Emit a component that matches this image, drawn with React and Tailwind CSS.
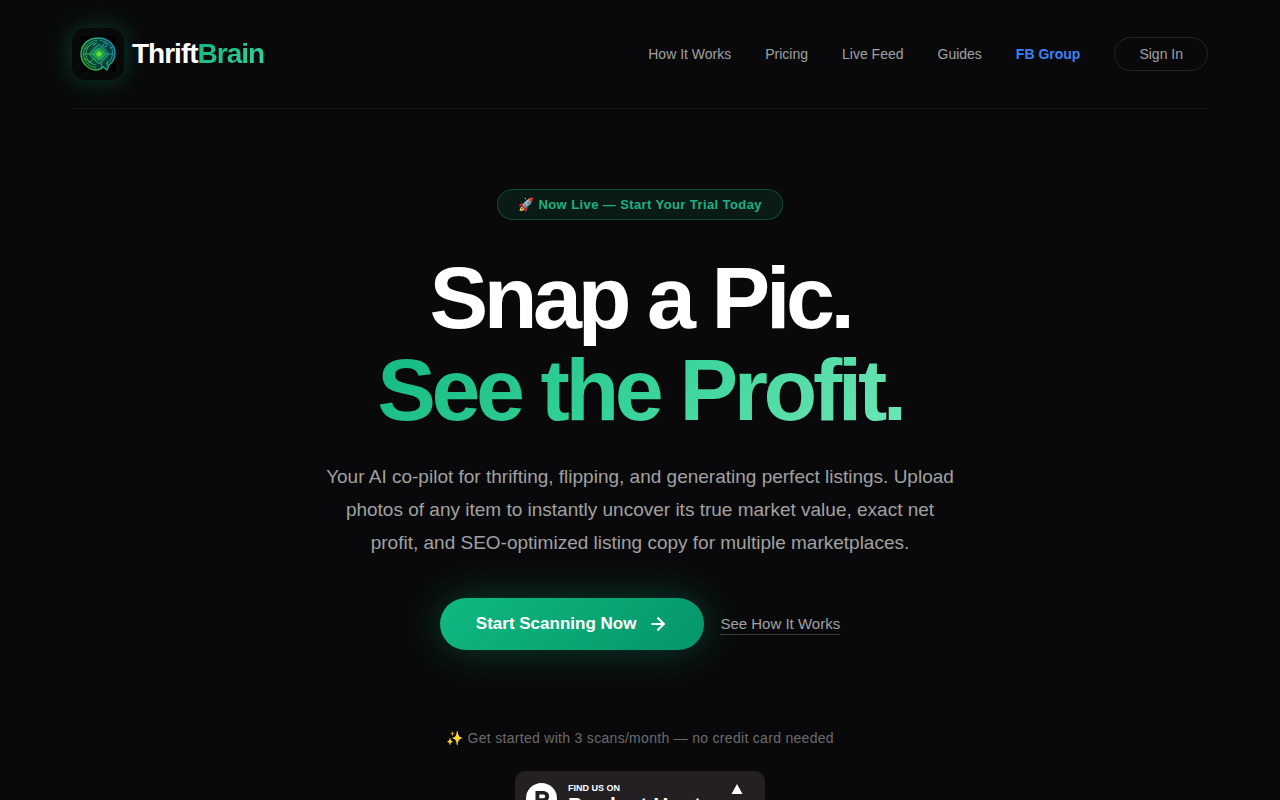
import { ArrowRight } from 'lucide-react';

const NAV_LINKS = [
  { label: 'How It Works', href: '#how-it-works' },
  { label: 'Pricing', href: '#pricing' },
  { label: 'Live Feed', href: '#live-feed' },
  { label: 'Guides', href: '#guides' }
];

function BrainMark() {
  return (
    <svg viewBox="0 0 36 36" className="size-9" fill="none" aria-hidden="true">
      <defs>
        <linearGradient id="mark-stroke" x1="4" y1="26" x2="33" y2="10" gradientUnits="userSpaceOnUse">
          <stop stopColor="#45b52e" />
          <stop offset="0.5" stopColor="#22b07a" />
          <stop offset="1" stopColor="#1f8fae" />
        </linearGradient>
        <radialGradient id="mark-core">
          <stop stopColor="#4fd42c" />
          <stop offset="0.45" stopColor="#1fa04c" stopOpacity="0.9" />
          <stop offset="1" stopColor="#0b5a5a" stopOpacity="0.4" />
        </radialGradient>
      </defs>
      <rect width="36" height="36" fill="#000" />
      <path
        d="M18 2C8 2 1 9 1 18c0 8 6 15 14 16 3 0 6-1 8-3l4 3 2-5c4-3 6-7 6-12C35 8 27 2 18 2Z"
        fill="#08403a"
      />
      <circle cx="19" cy="18" r="10" fill="url(#mark-core)" />
      <g stroke="url(#mark-stroke)" strokeWidth="0.9">
        <path
          d="M18 2C8 2 1 9 1 18c0 8 6 15 14 16 3 0 6-1 8-3l4 3 2-5c4-3 6-7 6-12C35 8 27 2 18 2Z"
          strokeWidth="1.4"
        />
        <path d="M17 4.500C9 5 3.500 11 3.500 18S9 31 16 31.500" />
        <path d="M15 7C9 8 6 13 6 18s4 10 10 11" />
        <path d="M20 4.500c8 1 12.500 6 12.500 12S29 26 26 28" />
        <path d="m19 8 10 10-10 10L9 18 19 8Z" />
        <path d="m19 12 7 6-7 6-7-6 7-6Z" />
        <path d="M3 18h12M23 18h11M5 13l8-6M4 22l8 5M8 27l6-4M22 31l-1-5M27 30l1-5M30 12l3-1M13 10l4-4" />
        <circle cx="25" cy="9" r="1.800" />
      </g>
      <path d="m19 15 3 3-3 3-3-3 3-3Z" fill="#6ae034" />
    </svg>
  );
}

function Header() {
  return (
    <header className="flex flex-wrap items-center justify-between gap-4 border-b border-white/5 py-7">
      <a href="#top" className="flex items-center gap-2">
        <span className="flex size-13 items-center justify-center rounded-[14px] bg-[#08090a] shadow-[0_0_24px_rgba(16,185,129,0.3)]">
          <BrainMark />
        </span>
        <span className="text-[28px] leading-8 font-bold tracking-[-1px] text-white">
          Thrift
          <span className="bg-linear-135 from-[#10b981] to-[#34d399] bg-clip-text text-transparent">Brain</span>
        </span>
      </a>

      <nav className="flex flex-wrap items-center gap-[34px] text-sm text-neutral-400">
        {NAV_LINKS.map((link) => (
          <a key={link.label} href={link.href} className="transition hover:text-white">
            {link.label}
          </a>
        ))}
        <a href="#fb-group" className="font-bold text-[#3b82f6]">
          FB Group
        </a>
        <button
          type="button"
          className="rounded-full border border-white/10 px-6 py-1.5 transition hover:border-white/30"
        >
          Sign In
        </button>
      </nav>
    </header>
  );
}

function ProductHuntBadge() {
  return (
    <a
      href="#product-hunt"
      className="flex h-[54px] w-[250px] items-start rounded-[10px] bg-[#231f23] pt-3 pr-[22px] pl-[11px] text-left text-white"
    >
      <svg viewBox="0 0 31 31" className="size-[31px] shrink-0" aria-hidden="true">
        <circle cx="15.5" cy="15.5" r="15.5" fill="#fff" />
        <path
          d="M9.5 8h8.2a5.4 5.4 0 0 1 0 10.8h-4.4V23H9.5V8Zm3.8 3.6v3.6h4.1a1.8 1.8 0 0 0 0-3.6h-4.1Z"
          fill="#231f23"
        />
      </svg>
      <span className="ml-[11px] flex flex-col">
        <span className="text-[9px] leading-[10px] font-bold">FIND US ON</span>
        <span className="text-[21px] leading-6 font-bold">Product Hunt</span>
      </span>
      <svg viewBox="0 0 12 11" className="ml-auto h-[11px] w-3" aria-hidden="true">
        <path d="M6 1l5.500 10H0.500L6 1Z" fill="#fff" />
      </svg>
    </a>
  );
}

function Hero() {
  return (
    <main className="flex flex-col items-center pt-20 text-center">
      <p className="rounded-full border border-[#10b981]/30 bg-[#10b981]/10 px-5 py-1 text-[13px] leading-[21px] font-bold tracking-[0.4px] text-[#1fb083]">
        🚀 Now Live — Start Your Trial Today
      </p>

      <h1 className="mt-8 text-[88px] leading-[92px] font-bold tracking-tighter text-white">
        Snap a Pic.
        <br />
        <span className="bg-linear-135 from-[#10b981] via-[#34d399] to-[#6ee7b7] bg-clip-text text-transparent">
          See the Profit.
        </span>
      </h1>

      <p className="mt-6 max-w-[640px] text-[19px] leading-[33px] text-neutral-400">
        Your AI co-pilot for thrifting, flipping, and generating perfect listings. Upload photos of any item to
        instantly uncover its true market value, exact net profit, and SEO-optimized listing copy for multiple
        marketplaces.
      </p>

      <div className="mt-[39px] flex flex-wrap items-center justify-center gap-4">
        <button
          type="button"
          className="flex h-13 items-center gap-3 rounded-full bg-linear-135 from-[#10b981] to-[#059669] px-9 text-[17px] font-bold text-white shadow-[0_0_40px_rgba(16,185,129,0.3)] transition hover:brightness-110"
        >
          Start Scanning Now
          <ArrowRight size={20} strokeWidth={2.5} aria-hidden="true" />
        </button>
        <a href="#how-it-works" className="border-b border-white/20 text-[15px] leading-5 text-neutral-400">
          See How It Works
        </a>
      </div>

      <p className="mt-19 mb-[21px] text-sm leading-6 tracking-[0.3px] text-[#6b6b6b]">
        ✨ Get started with 3 scans/month — no credit card needed
      </p>

      <ProductHuntBadge />
    </main>
  );
}

export default function App() {
  return (
    <div
      id="top"
      className="min-h-screen bg-[#09090b] font-['Liberation_Sans',Arial,sans-serif] antialiased"
    >
      <div className="mx-auto max-w-[1200px] px-8">
        <Header />
        <Hero />
      </div>
    </div>
  );
}
